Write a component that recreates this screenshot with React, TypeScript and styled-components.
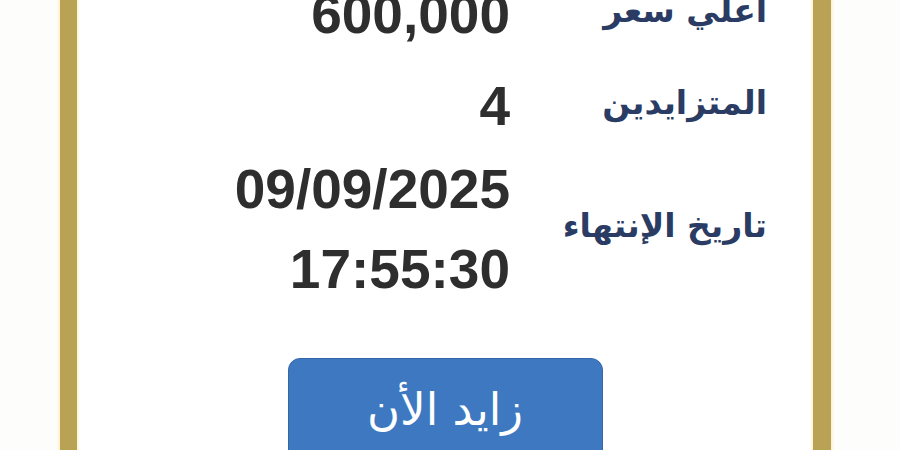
import styled, { createGlobalStyle } from 'styled-components';

const GlobalStyle = createGlobalStyle`
  html, body {
    margin: 0;
    padding: 0;
    background: #fdfdfc;
    overflow: hidden;
  }
`;

type Row = {
  label: string;
  values: string[];
  gap: number;
};

const rows: Row[] = [
  { label: 'أعلي سعر', values: ['600,000'], gap: 0 },
  { label: 'المتزايدين', values: ['4'], gap: 12 },
  { label: 'تاريخ الإنتهاء', values: ['09/09/2025', '17:55:30'], gap: 3 },
];

const App: React.FC = () => {
  return (
    <>
      <GlobalStyle />
      <Page>
        <Card>
          <Details>
            {rows.map((row) => (
              <DetailRow key={row.label} $gap={row.gap}>
                <Value>
                  {row.values.map((v) => (
                    <ValueLine key={v}>{v}</ValueLine>
                  ))}
                </Value>
                <Label>{row.label}</Label>
              </DetailRow>
            ))}
          </Details>
          <BidButton type="button">زايد الأن</BidButton>
        </Card>
      </Page>
    </>
  );
};

const Page = styled.div`
  width: 900px;
  height: 450px;
  padding: 0 69px 0 60px;
  box-sizing: border-box;
  overflow: hidden;
`;

const Card = styled.div`
  margin-top: -26px;
  height: 520px;
  background: #ffffff;
  border-left: 17px solid #b9a253;
  border-right: 18px solid #b9a253;
  box-shadow: 0 0 3px 1px rgba(250, 236, 170, 0.9), inset 0 0 3px 1px rgba(250, 238, 180, 0.9);
  display: flex;
  flex-direction: column;
  align-items: center;
`;

const Details = styled.div`
  align-self: stretch;
  padding-right: 46px;
  display: flex;
  flex-direction: column;
`;

const DetailRow = styled.div<{ $gap: number }>`
  margin-top: ${({ $gap }) => $gap}px;
  display: grid;
  grid-template-columns: 1fr 235px;
  column-gap: 22px;
  align-items: center;
`;

const Value = styled.div`
  display: flex;
  flex-direction: column;
  align-items: flex-end;
`;

const ValueLine = styled.span`
  font-family: 'Liberation Sans', Arial, sans-serif;
  font-weight: 700;
  font-size: 55px;
  line-height: 80px;
  color: #2e2e2e;
`;

const Label = styled.span`
  direction: rtl;
  text-align: right;
  white-space: nowrap;
  font-family: 'DejaVu Sans', sans-serif;
  font-weight: 700;
  font-size: 33px;
  line-height: 40px;
  color: #2a3c64;
  margin-top: -6px;
`;

const BidButton = styled.button`
  margin-top: 49px;
  width: 315px;
  height: 108px;
  border: 1px solid #3466a8;
  border-radius: 12px;
  background: #3d78c1;
  color: #ffffff;
  direction: rtl;
  font-family: 'DejaVu Sans', sans-serif;
  font-size: 45px;
  padding: 0 0 6px;
`;

export default App;
